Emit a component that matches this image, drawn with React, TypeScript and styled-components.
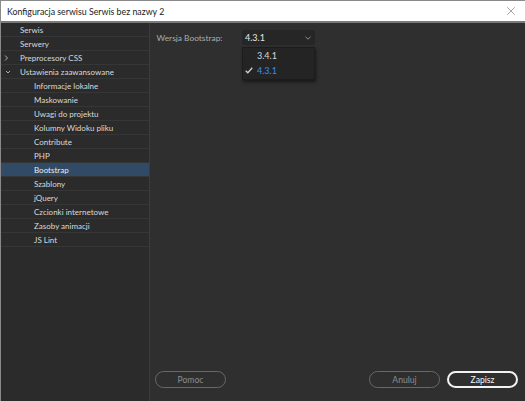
import React from 'react'
import styled, { createGlobalStyle } from 'styled-components'

const GlobalStyle = createGlobalStyle`
  html, body {
    margin: 0;
    padding: 0;
    background: #2e2e2e;
  }
  * {
    box-sizing: border-box;
  }
`

const Window = styled.div`
  width: 525px;
  height: 401px;
  display: flex;
  flex-direction: column;
  border-left: 1px solid #8a8a8a;
  border-top: 1px solid #8a8a8a;
  font-family: Lato, 'Noto Sans', sans-serif;
  background: #2e2e2e;
  overflow: hidden;
`

const TitleBar = styled.div`
  height: 22px;
  flex-shrink: 0;
  background: #ffffff;
  border-bottom: 2px solid #7a7a7a;
  display: flex;
  align-items: center;
  justify-content: space-between;
  padding: 0 10px 0 6px;
  font-size: 8.8px;
  color: #1a1a1a;
`

const Body = styled.div`
  flex: 1;
  display: flex;
  min-height: 0;
`

const Sidebar = styled.div`
  width: 149px;
  flex-shrink: 0;
  background: #2b2b2b;
  border-right: 1px solid #3c3c3c;
  display: flex;
  flex-direction: column;
`

const Row = styled.div<{ level: number; selected?: boolean }>`
  position: relative;
  height: 14px;
  display: flex;
  align-items: center;
  padding-left: ${(p) => (p.level === 0 ? 19 : 33)}px;
  border-bottom: 1px solid #363636;
  font-size: 8px;
  color: ${(p) => (p.selected ? '#ececec' : '#dadada')};
  background: ${(p) => (p.selected ? '#314a65' : 'transparent')};
  white-space: nowrap;
`

const Chevron = styled.span`
  position: absolute;
  left: 2px;
  top: 4px;
  width: 7px;
  height: 6px;
  display: flex;
`

const Content = styled.div`
  flex: 1;
  display: flex;
  flex-direction: column;
  justify-content: space-between;
  background: #2f2f2f;
  padding: 7px 7px 13px 5px;
`

const Field = styled.div`
  display: flex;
  align-items: center;
`

const Label = styled.div`
  width: 87px;
  padding-left: 1.5px;
  font-size: 8.4px;
  color: #ababab;
`

const SelectWrap = styled.div`
  position: relative;
`

const SelectBox = styled.div`
  width: 73px;
  height: 15px;
  background: #262626;
  border-radius: 2px;
  display: flex;
  align-items: center;
  justify-content: space-between;
  padding: 0 4px 0 3px;
  font-size: 9px;
  color: #e8e8e8;
`

const Menu = styled.div`
  position: absolute;
  left: 0;
  top: 17px;
  width: 73px;
  background: #242424;
  border: 1px solid #1c1c1c;
  box-shadow: 1px 2px 3px rgba(0, 0, 0, 0.5);
  padding: 0 0 1px 0;
  display: flex;
  flex-direction: column;
`

const MenuItem = styled.div<{ checked?: boolean }>`
  height: 15px;
  display: flex;
  align-items: center;
  padding-left: 2px;
  font-size: 9px;
  color: ${(p) => (p.checked ? '#3d8fe2' : '#d8d8d8')};
`

const Check = styled.span`
  width: 12px;
  display: flex;
  align-items: center;
`

const Footer = styled.div`
  display: flex;
  align-items: center;
  justify-content: space-between;
`

const Actions = styled.div`
  display: flex;
  gap: 7px;
`

const PillButton = styled.button<{ primary?: boolean }>`
  width: 71px;
  height: 17px;
  border-radius: 9px;
  background: transparent;
  border: ${(p) => (p.primary ? '2px solid #f2f2f2' : '1.5px solid #686868')};
  color: ${(p) => (p.primary ? '#f4f4f4' : '#8c8c8c')};
  font-family: inherit;
  font-size: 8.6px;
  padding: 0;
  cursor: pointer;
`

const items: { label: string; level: number; chevron?: 'right' | 'down'; selected?: boolean }[] = [
  { label: 'Serwis', level: 0 },
  { label: 'Serwery', level: 0 },
  { label: 'Preprocesory CSS', level: 0, chevron: 'right' },
  { label: 'Ustawienia zaawansowane', level: 0, chevron: 'down' },
  { label: 'Informacje lokalne', level: 1 },
  { label: 'Maskowanie', level: 1 },
  { label: 'Uwagi do projektu', level: 1 },
  { label: 'Kolumny Widoku pliku', level: 1 },
  { label: 'Contribute', level: 1 },
  { label: 'PHP', level: 1 },
  { label: 'Bootstrap', level: 1, selected: true },
  { label: 'Szablony', level: 1 },
  { label: 'jQuery', level: 1 },
  { label: 'Czcionki internetowe', level: 1 },
  { label: 'Zasoby animacji', level: 1 },
  { label: 'JS Lint', level: 1 },
]

const ChevronIcon = ({ dir }: { dir: 'right' | 'down' }) => (
  <svg width="7" height="6" viewBox="0 0 7 6">
    {dir === 'right' ? (
      <path d="M2 0.5 L4.5 3 L2 5.5" fill="none" stroke="#bdbdbd" strokeWidth="0.9" />
    ) : (
      <path d="M3 2 L5 4 L7 2" fill="none" stroke="#bdbdbd" strokeWidth="0.9" />
    )}
  </svg>
)

const App = () => {
  return (
    <>
      <GlobalStyle />
      <Window>
        <TitleBar>
          <span>Konfiguracja serwisu Serwis bez nazwy 2</span>
          <svg width="8" height="8" viewBox="0 0 8 8">
            <path d="M0.3 0.3 L7.7 7.7 M7.7 0.3 L0.3 7.7" stroke="#9a9a9a" strokeWidth="0.9" />
          </svg>
        </TitleBar>
        <Body>
          <Sidebar>
            {items.map((it) => (
              <Row key={it.label} level={it.level} selected={it.selected}>
                {it.chevron && (
                  <Chevron>
                    <ChevronIcon dir={it.chevron} />
                  </Chevron>
                )}
                {it.label}
              </Row>
            ))}
          </Sidebar>
          <Content>
            <Field>
              <Label>Wersja Bootstrap:</Label>
              <SelectWrap>
                <SelectBox>
                  <span>4.3.1</span>
                  <svg width="6" height="4" viewBox="0 0 6 4">
                    <path d="M0.5 0.8 L3 3.2 L5.5 0.8" fill="none" stroke="#9a9a9a" strokeWidth="0.9" />
                  </svg>
                </SelectBox>
                <Menu>
                  <MenuItem>
                    <Check />
                    3.4.1
                  </MenuItem>
                  <MenuItem checked>
                    <Check>
                      <svg width="8" height="7" viewBox="0 0 8 7">
                        <path d="M0.7 3.8 L2.8 5.8 L7.3 0.8" fill="none" stroke="#cfcfcf" strokeWidth="1.3" />
                      </svg>
                    </Check>
                    4.3.1
                  </MenuItem>
                </Menu>
              </SelectWrap>
            </Field>
            <Footer>
              <PillButton>Pomoc</PillButton>
              <Actions>
                <PillButton>Anuluj</PillButton>
                <PillButton primary>Zapisz</PillButton>
              </Actions>
            </Footer>
          </Content>
        </Body>
      </Window>
    </>
  )
}

export default App
